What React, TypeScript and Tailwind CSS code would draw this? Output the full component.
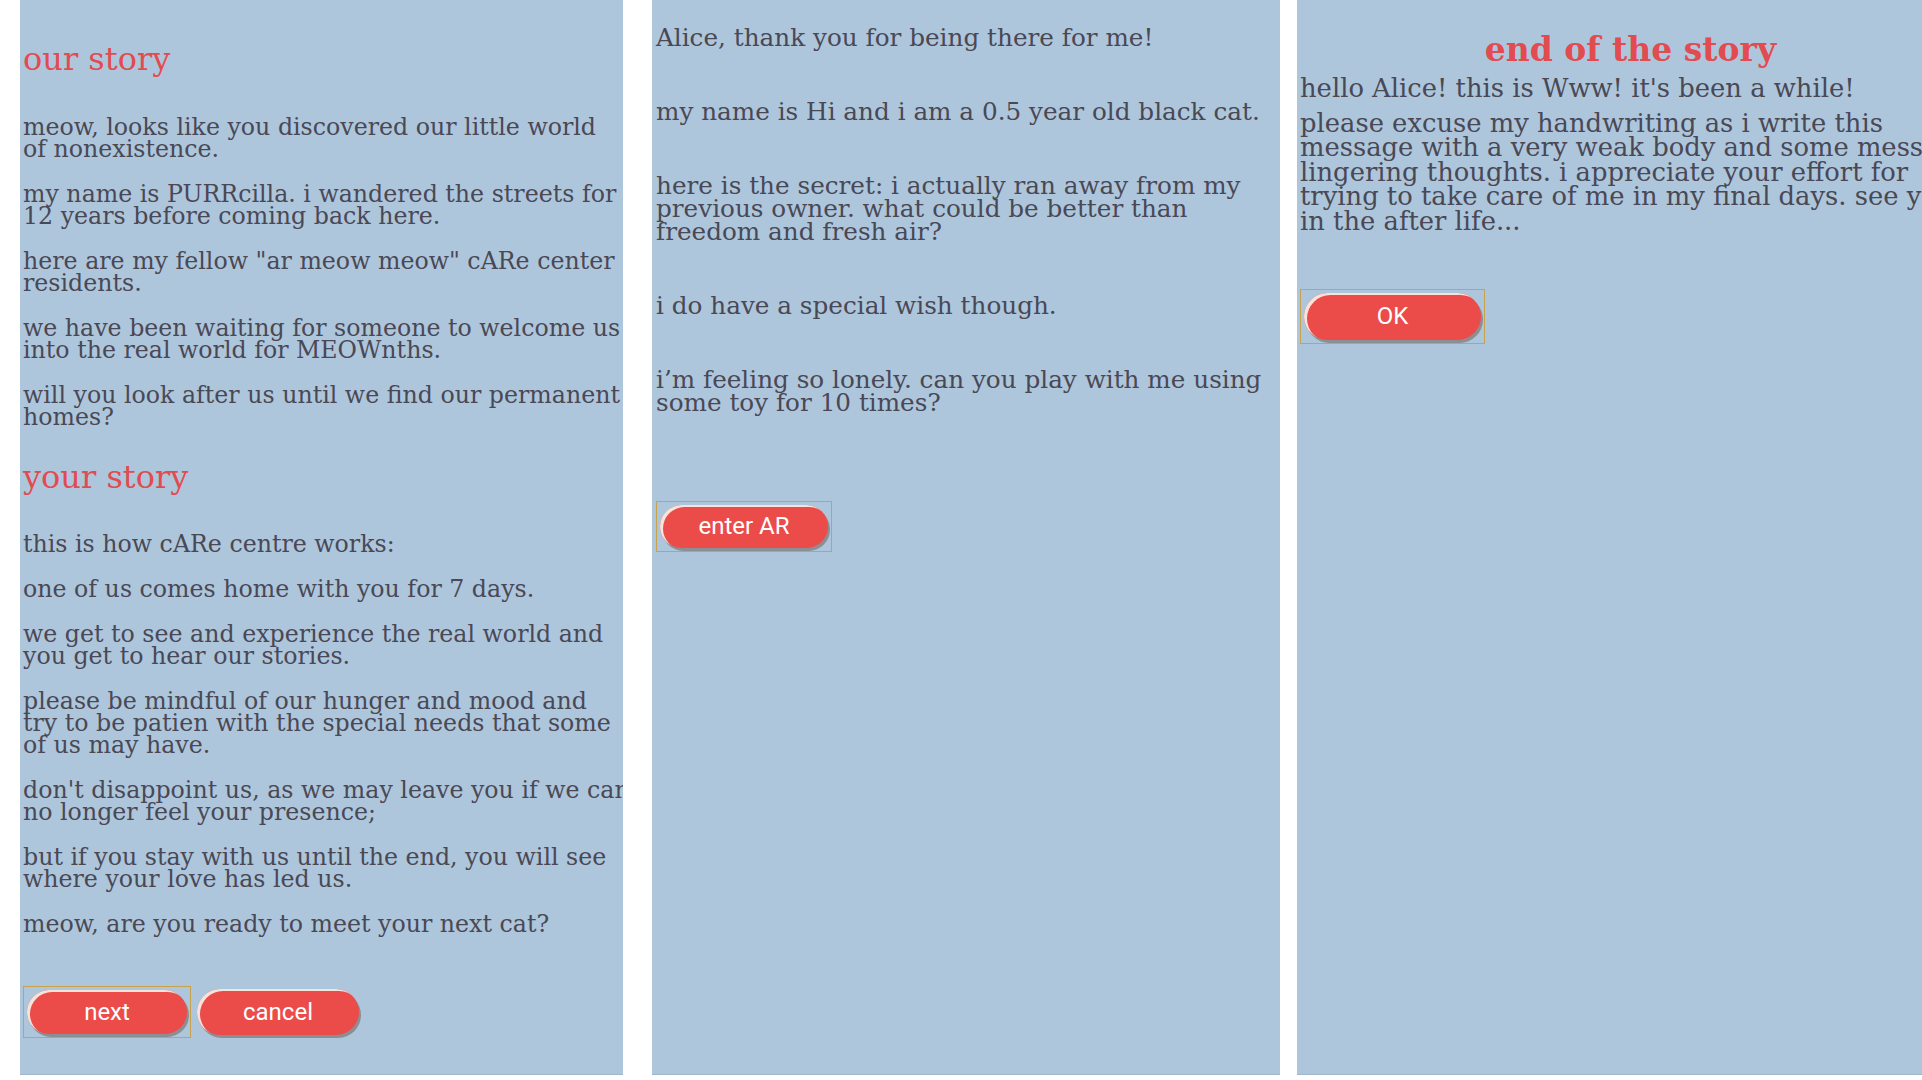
type Para = string[];

const storyOurs: Para[] = [
  ["meow, looks like you discovered our little world", "of nonexistence."],
  ["my name is PURRcilla. i wandered the streets for", "12 years before coming back here."],
  ['here are my fellow "ar meow meow" cARe center', "residents."],
  ["we have been waiting for someone to welcome us", "into the real world for MEOWnths."],
  ["will you look after us until we find our permanent", "homes?"],
];

const storyYours: Para[] = [
  ["this is how cARe centre works:"],
  ["one of us comes home with you for 7 days."],
  ["we get to see and experience the real world and", "you get to hear our stories."],
  [
    "please be mindful of our hunger and mood and",
    "try to be patien with the special needs that some",
    "of us may have.",
  ],
  ["don't disappoint us, as we may leave you if we can", "no longer feel your presence;"],
  ["but if you stay with us until the end, you will see", "where your love has led us."],
  ["meow, are you ready to meet your next cat?"],
];

const catTalk: Para[] = [
  ["Alice, thank you for being there for me!"],
  ["my name is Hi and i am a 0.5 year old black cat."],
  [
    "here is the secret: i actually ran away from my",
    "previous owner. what could be better than",
    "freedom and fresh air?",
  ],
  ["i do have a special wish though."],
  ["i’m feeling so lonely. can you play with me using", "some toy for 10 times?"],
];

const letter: Para = [
  "please excuse my handwriting as i write this",
  "message with a very weak body and some messy",
  "lingering thoughts. i appreciate your effort for",
  "trying to take care of me in my final days. see you",
  "in the after life...",
];

function Lines({ lines }: { lines: string[] }) {
  return (
    <>
      {lines.map((l, i) => (
        <span key={i} className="block whitespace-nowrap">
          {l}
        </span>
      ))}
    </>
  );
}

function Pill({ label, className }: { label: string; className: string }) {
  return (
    <div
      className={`flex items-center justify-center rounded-full bg-[#eb4c4a] font-['Roboto',sans-serif] text-[24px] text-white shadow-[inset_3px_2px_0_#f4e4dc,2px_3px_0_#8b8e93] ${className}`}
    >
      {label}
    </div>
  );
}

function Focused({ children }: { children: React.ReactNode }) {
  return <div className="border border-[#c9a24c] p-[3px]">{children}</div>;
}

export default function App() {
  return (
    <div className="flex h-[1080px] w-[1922px] overflow-hidden bg-white font-['DejaVu_Serif',serif] text-[#4a4854]">
      {/* our story / your story */}
      <section className="ml-[20px] flex h-[1075px] w-[603px] shrink-0 flex-col overflow-hidden border-b border-[#9fb7cc] bg-[#adc6dc] pl-[3px] text-[23.7px] leading-[22px]">
        <h1 className="mt-[41px] h-[36px] text-[32px] leading-[36px] text-[#e24b4f]">our story</h1>
        <div className="mt-[39px] flex flex-col gap-[23px]">
          {storyOurs.map((p, i) => (
            <p key={i}>
              <Lines lines={p} />
            </p>
          ))}
        </div>
        <h2 className="mt-[31px] h-[36px] text-[32px] leading-[36px] text-[#e24b4f]">your story</h2>
        <div className="mt-[38px] flex flex-col gap-[23px]">
          {storyYours.map((p, i) => (
            <p key={i}>
              <Lines lines={p} />
            </p>
          ))}
        </div>
        <div className="mt-[51px] flex items-center gap-[6px]">
          <Focused>
            <Pill label="next" className="h-[44px] w-[160px]" />
          </Focused>
          <Pill label="cancel" className="h-[46px] w-[162px]" />
        </div>
      </section>

      {/* cat message */}
      <section className="ml-[29px] flex h-[1075px] w-[628px] shrink-0 flex-col overflow-hidden border-b border-[#9fb7cc] bg-[#adc6dc] pl-[4px] pt-[26px] text-[24.7px] leading-[23px]">
        <div className="flex flex-col gap-[51px]">
          {catTalk.map((p, i) => (
            <p key={i}>
              <Lines lines={p} />
            </p>
          ))}
        </div>
        <div className="mt-[87px] self-start">
          <Focused>
            <Pill label="enter AR" className="h-[43px] w-[168px]" />
          </Focused>
        </div>
      </section>

      {/* end of the story */}
      <section className="ml-[17px] flex h-[1075px] w-[670px] shrink-0 flex-col border-b border-[#9fb7cc] bg-[#adc6dc] pl-[3px] pt-[31px] text-[25.8px] leading-[24.5px]">
        <h1 className="h-[38px] w-[661px] text-center text-[33px] font-bold leading-[38px] text-[#e24b4f]">
          end of the story
        </h1>
        <p className="mt-[7px]">hello Alice! this is Www! it's been a while!</p>
        <p className="mt-[10px]">
          <Lines lines={letter} />
        </p>
        <div className="mt-[56px] self-start">
          <Focused>
            <Pill label="OK" className="h-[47px] w-[177px]" />
          </Focused>
        </div>
      </section>
    </div>
  );
}
